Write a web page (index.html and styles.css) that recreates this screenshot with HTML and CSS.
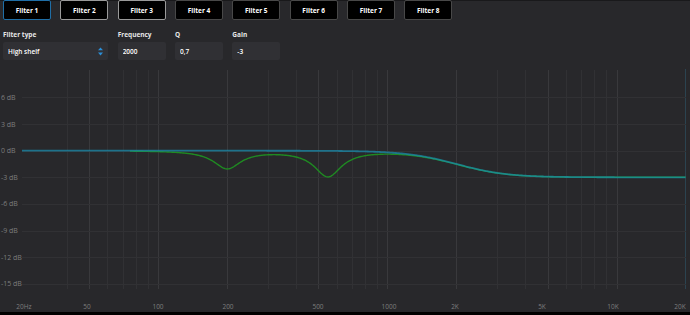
FILE: index.html
```html
<!DOCTYPE html>
<html lang="en">
<head>
  <meta charset="UTF-8">
  <title>Equalizer</title>
  <link rel="stylesheet" href="styles.css">
</head>
<body>
  <div class="app">
    <div class="tabs">
      <button class="tab active">Filter 1</button>
      <button class="tab used">Filter 2</button>
      <button class="tab used">Filter 3</button>
      <button class="tab">Filter 4</button>
      <button class="tab">Filter 5</button>
      <button class="tab">Filter 6</button>
      <button class="tab">Filter 7</button>
      <button class="tab">Filter 8</button>
    </div>

    <div class="controls">
      <div class="field wide">
        <label>Filter type</label>
        <div class="box select">
          <span>High shelf</span>
          <svg class="spin" width="5" height="9" viewBox="0 0 5 9"><path d="M0 3.2L2.5 0.4L5 3.2Z M0 5.6L2.5 8.4L5 5.6Z"/></svg>
        </div>
      </div>
      <div class="field">
        <label>Frequency</label>
        <input class="box" value="2000">
      </div>
      <div class="field">
        <label>Q</label>
        <input class="box" value="0,7">
      </div>
      <div class="field">
        <label>Gain</label>
        <input class="box" value="-3">
      </div>
    </div>

    <svg id="graph" class="graph" width="690" height="248" viewBox="0 64 690 248"></svg>
  </div>

  <script>
    const FS = 48000;
    const X0 = 158.2, XD = 229.2;   // x of 100 Hz, px per decade
    const Y0 = 150.7, YD = 8.873;   // y of 0 dB, px per dB
    const TOP = 70, BOTTOM = 289, LEFT = 22, RIGHT = 685.6;
    const NS = 'http://www.w3.org/2000/svg';
    const svg = document.getElementById('graph');

    const xOf = f => X0 + XD * Math.log10(f / 100);
    const yOf = db => Y0 - YD * db;
    const fOf = x => 100 * Math.pow(10, (x - X0) / XD);

    function add(tag, attrs, text) {
      const el = document.createElementNS(NS, tag);
      for (const k in attrs) el.setAttribute(k, attrs[k]);
      if (text) el.textContent = text;
      svg.appendChild(el);
      return el;
    }

    function peaking(f0, gain, q) {
      const A = Math.pow(10, gain / 40);
      const w0 = 2 * Math.PI * f0 / FS;
      const alpha = Math.sin(w0) / (2 * q);
      const c = Math.cos(w0);
      return [1 + alpha * A, -2 * c, 1 - alpha * A, 1 + alpha / A, -2 * c, 1 - alpha / A];
    }

    function highShelf(f0, gain, q) {
      const A = Math.pow(10, gain / 40);
      const w0 = 2 * Math.PI * f0 / FS;
      const alpha = Math.sin(w0) / (2 * q);
      const c = Math.cos(w0);
      const s = 2 * Math.sqrt(A) * alpha;
      return [
        A * ((A + 1) + (A - 1) * c + s),
        -2 * A * ((A - 1) + (A + 1) * c),
        A * ((A + 1) + (A - 1) * c - s),
        (A + 1) - (A - 1) * c + s,
        2 * ((A - 1) - (A + 1) * c),
        (A + 1) - (A - 1) * c - s
      ];
    }

    function dbAt(k, f) {
      const w = 2 * Math.PI * f / FS;
      const c1 = Math.cos(w), s1 = Math.sin(w), c2 = Math.cos(2 * w), s2 = Math.sin(2 * w);
      const nr = k[0] + k[1] * c1 + k[2] * c2, ni = k[1] * s1 + k[2] * s2;
      const dr = k[3] + k[4] * c1 + k[5] * c2, di = k[4] * s1 + k[5] * s2;
      return 10 * Math.log10((nr * nr + ni * ni) / (dr * dr + di * di));
    }

    function curve(list, from) {
      let d = '';
      for (let x = from; x <= RIGHT + 0.5; x += 1) {
        const px = Math.min(x, RIGHT);
        const f = fOf(px);
        const db = list.reduce((sum, k) => sum + dbAt(k, f), 0);
        d += (d ? 'L' : 'M') + px.toFixed(1) + ' ' + yOf(db).toFixed(2);
      }
      return d;
    }

    // grid
    const major = [50, 100, 200, 500, 1000, 2000, 5000, 10000];
    const freqs = [];
    for (let f = 40; f < 100; f += 10) freqs.push(f);
    for (let f = 100; f < 1000; f += 100) freqs.push(f);
    for (let f = 1000; f <= 10000; f += 1000) freqs.push(f);
    freqs.forEach(f => {
      const x = Math.round(xOf(f)) + 0.5;
      add('line', { x1: x, x2: x, y1: TOP, y2: BOTTOM, class: major.includes(f) ? 'grid major' : 'grid' });
    });
    add('line', { x1: 685.5, x2: 685.5, y1: 69, y2: BOTTOM, class: 'grid edge' });

    for (let db = 6; db >= -15; db -= 3) {
      const y = Math.round(yOf(db)) + 0.5;
      add('line', { x1: LEFT, x2: 686, y1: y, y2: y, class: 'grid' });
      add('text', { x: 1, y: yOf(db) + 2.5, class: 'ylabel' }, db + ' dB');
    }

    [['20Hz', 24], ['50', 87], ['100', 158], ['200', 228], ['500', 318], ['1000', 389],
     ['2K', 455], ['5K', 542], ['10K', 613], ['20K', 680]].forEach(([t, x]) => {
      add('text', { x: x, y: 308.5, class: 'xlabel' }, t);
    });

    // curves: sum of all filters, then the selected filter on top
    const shelf = highShelf(2000, -3, 0.7);
    const all = [shelf, peaking(200, -2, 3), peaking(550, -2.9, 3)];
    add('path', { d: curve(all, 130), class: 'sum' });
    add('path', { d: curve([shelf], LEFT), class: 'current' });
  </script>
</body>
</html>
```

FILE: styles.css
```css
body {
  margin: 0;
  background-color: #000;
  font-family: "Open Sans", "Liberation Sans", sans-serif;
  color: #f2f2f2;
}

.app {
  height: 312px;
  background-color: #28282b;
  box-shadow: inset 0 1px 0 #19191b;
}

.tabs {
  display: grid;
  grid-template-columns: repeat(8, 48px);
  column-gap: 9.33px;
  padding: 0 3px;
}

.tab {
  height: 20px;
  padding: 0;
  background-color: #000;
  border: 1px solid #484848;
  border-radius: 2px;
  color: #fff;
  font-family: inherit;
  font-size: 6.5px;
  font-weight: 700;
}

.tab.active {
  border-color: #1f6ea6;
}

.tab.used {
  border-color: #9a9a9a;
}

.controls {
  display: grid;
  grid-template-columns: repeat(5, 48px);
  column-gap: 9.33px;
  padding: 10px 3px 4px;
}

.field {
  display: flex;
  flex-direction: column;
}

.field.wide {
  grid-column: span 2;
}

.field label {
  height: 10px;
  line-height: 10px;
  margin-bottom: 2px;
  font-size: 6.5px;
  font-weight: 700;
  color: #e6e6e6;
}

.box {
  width: 100%;
  height: 18px;
  box-sizing: border-box;
  margin: 0;
  padding: 0 5px;
  background-color: #303034;
  border: none;
  border-radius: 2px;
  color: #fff;
  font-family: inherit;
  font-size: 6.5px;
  font-weight: 600;
  outline: none;
}

.select {
  display: flex;
  align-items: center;
  justify-content: space-between;
}

.spin {
  fill: #2b8fd8;
}

.graph {
  display: block;
}

.graph .grid {
  stroke: #313134;
  stroke-width: 1;
}

.graph .grid.major {
  stroke: #39393c;
}

.graph .grid.edge {
  stroke: #2b4350;
}

.graph text {
  font-family: "Open Sans", "Liberation Sans", sans-serif;
  fill: #7d7d7d;
}

.graph .ylabel {
  font-size: 7px;
}

.graph .xlabel {
  font-size: 6.5px;
  text-anchor: middle;
}

.graph .sum {
  fill: none;
  stroke: #1f8a22;
  stroke-width: 1.4;
}

.graph .current {
  fill: none;
  stroke: #1b8fb0;
  stroke-opacity: 0.72;
  stroke-width: 1.8;
}
```
